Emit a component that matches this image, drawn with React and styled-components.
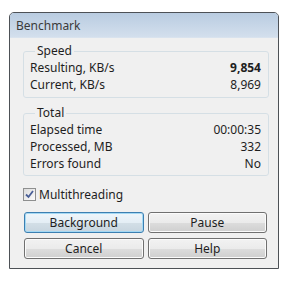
import React, { useState } from 'react';
import styled, { createGlobalStyle, css } from 'styled-components';

const GlobalStyle = createGlobalStyle`
  body {
    margin: 0;
    background: #fff;
    font-family: "Noto Sans", "Liberation Sans", sans-serif;
  }
`;

const Window = styled.div`
  box-sizing: border-box;
  margin: 12px 0 0 9px;
  width: 270px;
  height: 257px;
  border: 1px solid #4d5156;
  border-radius: 5px 5px 0 0;
  background: #f0f0f0;
  display: flex;
  flex-direction: column;
  overflow: hidden;
`;

const TitleBar = styled.div`
  height: 24px;
  flex: none;
  padding-left: 6px;
  display: flex;
  align-items: center;
  background: linear-gradient(#b9cce1, #d3dfed);
  color: #3b3b3b;
  font-size: 12px;
  border-bottom: 1px solid #d9e3ee;
`;

const Body = styled.div`
  flex: 1;
  padding: 6px 9px 0 13px;
  font-size: 11px;
  color: #1e1e1e;
`;

const Group = styled.fieldset`
  margin: 0 0 ${p => p.$gap || 0}px;
  padding: 1px 7px ${p => p.$bottom || 4}px 6px;
  border: 1px solid #d5dfe5;
  border-radius: 3px;
  min-width: 0;

  legend {
    padding: 0 2px;
    margin-left: 5px;
    font-size: 12px;
    line-height: 14px;
  }
`;

const Row = styled.div`
  display: flex;
  justify-content: space-between;
  align-items: center;
  height: 17px;
  font-size: 12px;
`;

const Value = styled.span`
  font-weight: ${p => (p.$bold ? 700 : 400)};
`;

const CheckRow = styled.label`
  display: flex;
  align-items: center;
  gap: 3px;
  height: 17px;
  margin: 10px 0 9px;
  font-size: 12px;
  cursor: default;
`;

const Box = styled.span`
  box-sizing: border-box;
  width: 13px;
  height: 13px;
  border: 1px solid #8e8f8f;
  background: linear-gradient(135deg, #dcdcdc, #fbfbfb);
  display: flex;
  align-items: center;
  justify-content: center;
`;

const Buttons = styled.div`
  display: grid;
  grid-template-columns: 1fr 1fr;
  gap: 5px 4px;
  margin: 0 2px 0 1px;
`;

const Button = styled.button`
  height: 21px;
  padding: 0;
  font-family: inherit;
  font-size: 12px;
  color: #1e1e1e;
  border: 1px solid #707070;
  border-radius: 3px;
  box-shadow: inset 0 0 0 1px #fbfbfb;
  background: linear-gradient(#f2f2f2 0%, #ebebeb 50%, #dddddd 51%, #cfcfcf 100%);

  ${p =>
    p.$default &&
    css`
      border-color: #3c7fb1;
      box-shadow: inset 0 0 0 1px #a4d9f4;
      background: linear-gradient(#eef6fb 0%, #e4eef5 50%, #d3dfe7 51%, #c7d5df 100%);
    `}
`;

const speed = [
  { label: 'Resulting, KB/s', value: '9,854', bold: true },
  { label: 'Current, KB/s', value: '8,969' },
];

const total = [
  { label: 'Elapsed time', value: '00:00:35' },
  { label: 'Processed, MB', value: '332' },
  { label: 'Errors found', value: 'No' },
];

const App = () => {
  const [multi, setMulti] = useState(true);

  return (
    <>
      <GlobalStyle />
      <Window>
        <TitleBar>Benchmark</TitleBar>
        <Body>
          <Group $gap={8}>
            <legend>Speed</legend>
            {speed.map(r => (
              <Row key={r.label}>
                <span>{r.label}</span>
                <Value $bold={r.bold}>{r.value}</Value>
              </Row>
            ))}
          </Group>
          <Group $bottom={3}>
            <legend>Total</legend>
            {total.map(r => (
              <Row key={r.label}>
                <span>{r.label}</span>
                <Value>{r.value}</Value>
              </Row>
            ))}
          </Group>
          <CheckRow onClick={() => setMulti(!multi)}>
            <Box>
              {multi && (
                <svg width="9" height="9" viewBox="0 0 9 9">
                  <path d="M1 4.5 L3.5 7 L8 1" fill="none" stroke="#4a5f97" strokeWidth="1.8" />
                </svg>
              )}
            </Box>
            Multithreading
          </CheckRow>
          <Buttons>
            <Button $default>Background</Button>
            <Button>Pause</Button>
            <Button>Cancel</Button>
            <Button>Help</Button>
          </Buttons>
        </Body>
      </Window>
    </>
  );
};

export default App;
